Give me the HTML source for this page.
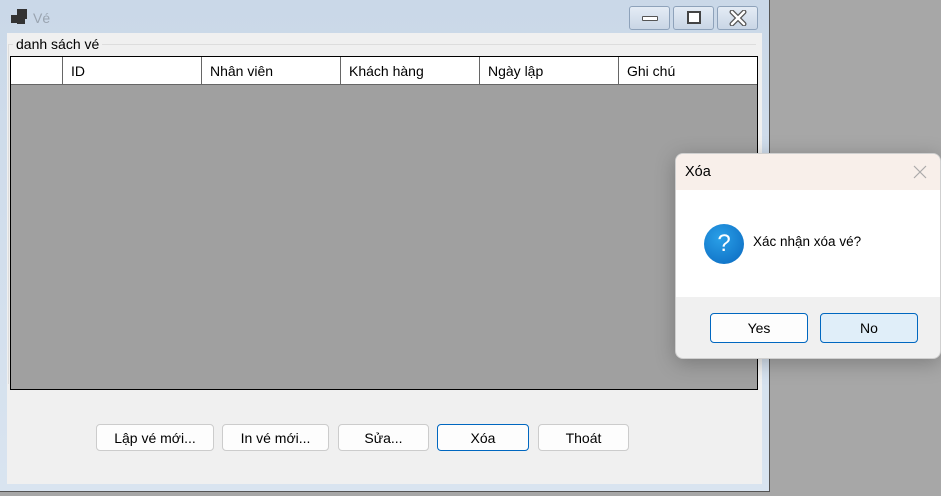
<!DOCTYPE html>
<html><head><meta charset="utf-8"><style>
*{box-sizing:border-box;margin:0;padding:0}
body{width:941px;height:496px;position:relative;overflow:hidden;background:#a7a7a7;font-family:"Liberation Sans","DejaVu Sans",sans-serif;font-size:14px;color:#000}
.abs{position:absolute}
.win{left:0;top:0;width:770px;height:492px;background:linear-gradient(#cad8e8,#d9e4f0);border-right:1px solid #555;border-bottom:1px solid #555}
.client{left:7px;top:33px;width:755px;height:451px;background:#f0f0f0}
.cb{top:6px;height:24px;border:1px solid #8ea2ba;border-radius:3px;background:linear-gradient(#e4ecf5,#c9d6e5)}
.grid{left:10px;top:56px;width:748px;height:334px;border:1px solid #000;background:#a0a0a0}
.hdr{left:0;top:0;width:746px;height:28px;background:#fff;border-bottom:1px solid #666}
.col{top:0;height:27px;border-left:1px solid #666;padding-left:8px;line-height:28px;font-size:14px}
.btn{top:424px;height:27px;border:1px solid #ccc;border-radius:4px;background:#fdfdfd;text-align:center;line-height:26px;font-size:14px}
.dlg{left:675px;top:153px;width:266px;height:206px;border-radius:8px;overflow:hidden;background:#f0f0f0;box-shadow:0 4px 20px rgba(0,0,0,.25);border:1px solid #cfcfcf}
.dbtn{top:159px;width:98px;height:30px;border:1px solid #0067c0;border-radius:4px;text-align:center;line-height:28px;font-size:14px}
</style></head><body>
<div class="abs win">
  <div class="abs" style="left:11px;top:15px;width:8px;height:8px;background:#333"></div>
  <div class="abs" style="left:17px;top:9px;width:10px;height:10px;background:#333"></div>
  <div class="abs" style="left:17px;top:19px;width:8px;height:5px;background:#333"></div>
  <div class="abs" style="left:33px;top:10px;color:#9aa4b0;font-size:14px">Vé</div>
  <div class="abs cb" style="left:629px;width:41px"><div class="abs" style="left:12px;top:9px;width:16px;height:5px;background:#fff;border:1px solid #555;border-radius:1px"></div></div>
  <div class="abs cb" style="left:673px;width:41px"><div class="abs" style="left:13px;top:4px;width:14px;height:13px;border:2px solid #444;background:#fff"></div></div>
  <div class="abs cb" style="left:717px;width:41px">
    <svg class="abs" style="left:11px;top:3px" width="18" height="16"><path d="M3 2L15 14M15 2L3 14" stroke="#555" stroke-width="5" stroke-linecap="round"/><path d="M3 2L15 14M15 2L3 14" stroke="#fff" stroke-width="2.5" stroke-linecap="round"/></svg>
  </div>
  <div class="abs client">
    <div class="abs" style="left:1px;top:11px;width:748px;height:1px;background:#ddd"></div>
    <div class="abs" style="left:1px;top:11px;width:1px;height:340px;background:#ddd"></div>
    <div class="abs" style="left:6px;top:3px;background:#f0f0f0;padding:0 3px;font-size:14px">danh sách vé</div>
  </div>
  <div class="abs grid">
    <div class="abs hdr">
      <div class="abs col" style="left:51px;width:139px">ID</div>
      <div class="abs col" style="left:190px;width:139px">Nhân viên</div>
      <div class="abs col" style="left:329px;width:139px">Khách hàng</div>
      <div class="abs col" style="left:468px;width:139px">Ngày lập</div>
      <div class="abs col" style="left:607px;width:139px">Ghi chú</div>
    </div>
  </div>
  <div class="abs btn" style="left:96px;width:118px">Lập vé mới...</div>
  <div class="abs btn" style="left:222px;width:107px">In vé mới...</div>
  <div class="abs btn" style="left:338px;width:91px">Sửa...</div>
  <div class="abs btn" style="left:437px;width:92px;border-color:#0067c0">Xóa</div>
  <div class="abs btn" style="left:538px;width:91px">Thoát</div>
</div>
<div class="abs dlg">
  <div class="abs" style="left:0;top:0;width:266px;height:36px;background:#f8efea"></div>
  <div class="abs" style="left:9px;top:10px;font-size:14.5px">Xóa</div>
  <svg class="abs" style="left:237px;top:11px" width="14" height="14"><path d="M1 1L13 13M13 1L1 13" stroke="#aaa" stroke-width="1.2"/></svg>
  <div class="abs" style="left:0;top:36px;width:266px;height:107px;background:#fff"></div>
  <div class="abs" style="left:28px;top:70px;width:40px;height:40px;border-radius:50%;background:radial-gradient(circle at 40% 35%,#2aa0e8,#0a68bf);color:#fff;text-align:center;line-height:40px;font-size:24px">?</div>
  <div class="abs" style="left:77px;top:80px;font-size:13.5px">Xác nhận xóa vé?</div>
  <div class="abs dbtn" style="left:34px;background:#fdfdfd">Yes</div>
  <div class="abs dbtn" style="left:144px;background:#e0eef9">No</div>
</div>
</body></html>
